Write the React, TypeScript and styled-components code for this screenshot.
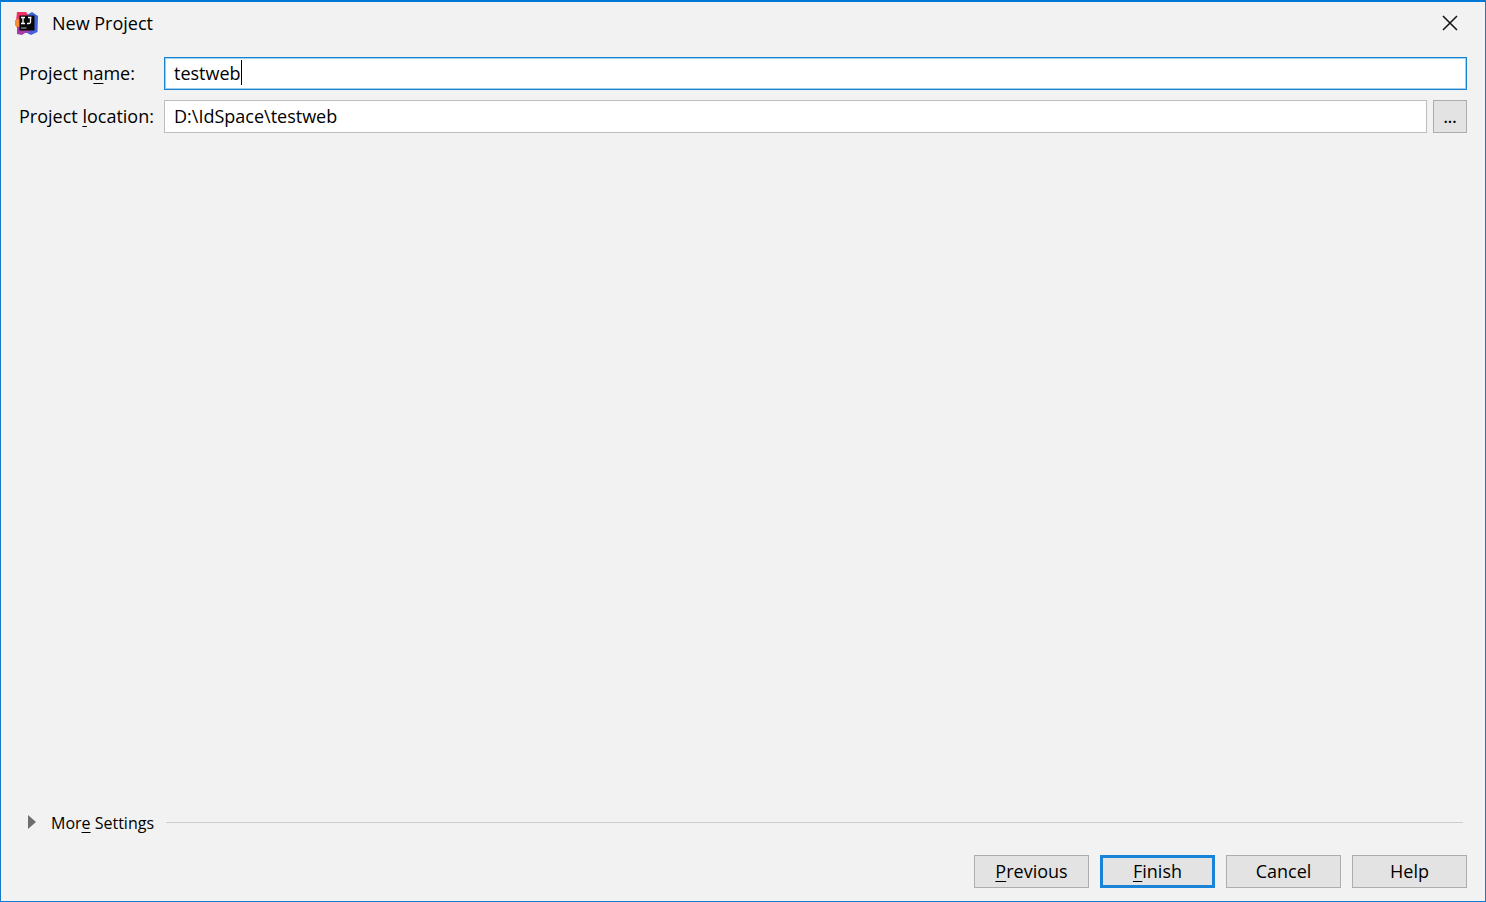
import React, { useState } from "react";
import styled, { createGlobalStyle, css } from "styled-components";

const GlobalStyle = createGlobalStyle`
  *, *::before, *::after { box-sizing: border-box; }
  body {
    margin: 0;
    background: #f2f2f2;
    color: #000;
    font-family: "Open Sans", "Noto Sans", "Noto Sans CJK SC", sans-serif;
    font-size: 18px;
    line-height: 24px;
  }
  button, input { font: inherit; color: inherit; }
`;

const Dialog = styled.div`
  display: flex;
  flex-direction: column;
  min-height: 100vh;
  background: #f2f2f2;
  border: 1px solid #1979ca;
  border-top: 2px solid #0078d7;
`;

const TitleBar = styled.header`
  display: flex;
  align-items: center;
  height: 42px;
  padding: 0 18px 0 13px;
`;

const Title = styled.h1`
  flex: 1;
  margin: 0 0 0 13px;
  font-size: 18px;
  font-weight: 400;
`;

const CloseButton = styled.button`
  display: flex;
  align-items: center;
  justify-content: center;
  width: 34px;
  height: 34px;
  padding: 0;
  border: 0;
  background: transparent;
`;

const Form = styled.form`
  display: flex;
  flex: 1;
  flex-direction: column;
  padding: 13px 18px;
`;

const Fields = styled.div`
  display: grid;
  grid-template-columns: 139px 1fr;
  column-gap: 6px;
  row-gap: 10px;
  align-items: center;
`;

const Label = styled.label`
  padding-bottom: 2px;
  white-space: nowrap;
`;

const Mnemonic = styled.span`
  text-decoration: underline;
  text-decoration-thickness: 1px;
  text-underline-offset: 3px;
  text-decoration-skip-ink: none;
`;

const FieldRow = styled.div`
  display: flex;
  gap: 6px;
`;

const FieldBox = styled.div<{ $active?: boolean }>`
  display: flex;
  flex: 1;
  align-items: center;
  height: 33px;
  padding: 0 9px 2px;
  background: #fff;
  border: 1px solid #bdbdbd;
  ${({ $active }) =>
    $active &&
    css`
      border-color: #1883d0;
      box-shadow: inset 0 0 0 1px #a3cdec;
    `}
`;

const TextInput = styled.input<{ $fit?: boolean }>`
  height: 24px;
  padding: 0;
  border: 0;
  outline: 0;
  background: transparent;
  caret-color: transparent;
  ${({ $fit }) => ($fit ? "field-sizing: content;" : "flex: 1; min-width: 0;")}
`;

const Caret = styled.span`
  width: 1px;
  height: 25px;
  background: #000;
`;

const Button = styled.button<{ $primary?: boolean; $compact?: boolean }>`
  display: flex;
  align-items: center;
  justify-content: center;
  width: ${({ $compact }) => ($compact ? 34 : 115)}px;
  height: 33px;
  padding: 0 0 2px;
  background: #e3e3e3;
  border: ${({ $primary }) => ($primary ? "3px solid #1883d7" : "1px solid #adadad")};
  white-space: pre;
`;

const Dots = styled.span`
  padding-top: 2px;
  font-size: 16px;
  font-weight: 600;
`;

const MoreSettings = styled.div`
  display: flex;
  align-items: center;
  gap: 12px;
  margin-top: auto;
  padding: 0 4px 0 9px;
`;

const Disclosure = styled.button`
  display: flex;
  align-items: center;
  gap: 15px;
  padding: 0;
  border: 0;
  background: transparent;
  font-size: 16px;
`;

const DisclosureText = styled.span`
  padding-top: 2px;
`;

const Rule = styled.hr`
  flex: 1;
  margin: 0;
  border: 0;
  border-top: 1px solid #cdcdcd;
`;

const Actions = styled.footer`
  display: flex;
  justify-content: flex-end;
  gap: 11px;
  margin-top: 20px;
`;

const AppLogo = () => (
  <svg width="25" height="25" viewBox="0 0 25 25" aria-hidden="true">
    <defs>
      <linearGradient id="logo-blue" x1="0" y1="0" x2="0.6" y2="1">
        <stop offset="0" stopColor="#3468dc" />
        <stop offset="1" stopColor="#4b62df" />
      </linearGradient>
      <linearGradient id="logo-pink" x1="0" y1="0" x2="0.3" y2="1">
        <stop offset="0" stopColor="#f52d5f" />
        <stop offset="1" stopColor="#df4287" />
      </linearGradient>
    </defs>
    <path d="M13 4 L18 1 L24 5 L23.500 21 L17 24 L9 20 Z" fill="url(#logo-blue)" />
    <path d="M3 1 L12 1 L16 6 L7 18 L4 17 L2 10 Z" fill="url(#logo-pink)" />
    <path d="M1 9 L5 8 L6 16 L3 17 L1 14 Z" fill="#f68b35" />
    <path d="M3 16 L8 15 L17 21 L11 22 L8 24 L3 23 Z" fill="#a33dac" />
    <rect x="5.500" y="4.500" width="15" height="15" fill="#080808" />
    <path d="M7 6.500h4M9 6.500v6M7 12.500h4M14 6.500h3.500M16.500 6.500v4.500q0 1.500-1.500 1.500h-2" fill="none" stroke="#fff" strokeWidth="1.300" />
    <path d="M7 17h5.500" stroke="#bbb" strokeWidth="1" />
  </svg>
);

const CloseIcon = () => (
  <svg width="16" height="16" viewBox="0 0 16 16" aria-hidden="true">
    <path d="M1 1 L15 15 M15 1 L1 15" stroke="#111" strokeWidth="1.500" />
  </svg>
);

const ArrowIcon = () => (
  <svg width="8" height="14" viewBox="0 0 8 14" aria-hidden="true">
    <path d="M0 0 L8 7 L0 14 Z" fill="#6e6e6e" />
  </svg>
);

export default function App() {
  const [name, setName] = useState("testweb");
  const [location, setLocation] = useState("D:\\IdSpace\\testweb");

  return (
    <>
      <GlobalStyle />
      <Dialog role="dialog" aria-labelledby="dialog-title">
        <TitleBar>
          <AppLogo />
          <Title id="dialog-title">New Project</Title>
          <CloseButton type="button" aria-label="Close">
            <CloseIcon />
          </CloseButton>
        </TitleBar>
        <Form onSubmit={(event) => event.preventDefault()}>
          <Fields>
            <Label htmlFor="project-name">
              Project n<Mnemonic>a</Mnemonic>me:
            </Label>
            <FieldBox $active>
              <TextInput
                $fit
                id="project-name"
                value={name}
                onChange={(event) => setName(event.target.value)}
              />
              <Caret />
            </FieldBox>
            <Label htmlFor="project-location">
              Project <Mnemonic>l</Mnemonic>ocation:
            </Label>
            <FieldRow>
              <FieldBox>
                <TextInput
                  id="project-location"
                  value={location}
                  onChange={(event) => setLocation(event.target.value)}
                />
              </FieldBox>
              <Button type="button" $compact aria-label="Browse">
                <Dots>...</Dots>
              </Button>
            </FieldRow>
          </Fields>
          <MoreSettings>
            <Disclosure type="button" aria-expanded={false}>
              <ArrowIcon />
              <DisclosureText>
                Mor<Mnemonic>e</Mnemonic> Settings
              </DisclosureText>
            </Disclosure>
            <Rule />
          </MoreSettings>
          <Actions>
            <Button type="button">
              <Mnemonic>P</Mnemonic>revious
            </Button>
            <Button type="submit" $primary>
              <Mnemonic>F</Mnemonic>inish
            </Button>
            <Button type="button">Cancel</Button>
            <Button type="button">Help</Button>
          </Actions>
        </Form>
      </Dialog>
    </>
  );
}
